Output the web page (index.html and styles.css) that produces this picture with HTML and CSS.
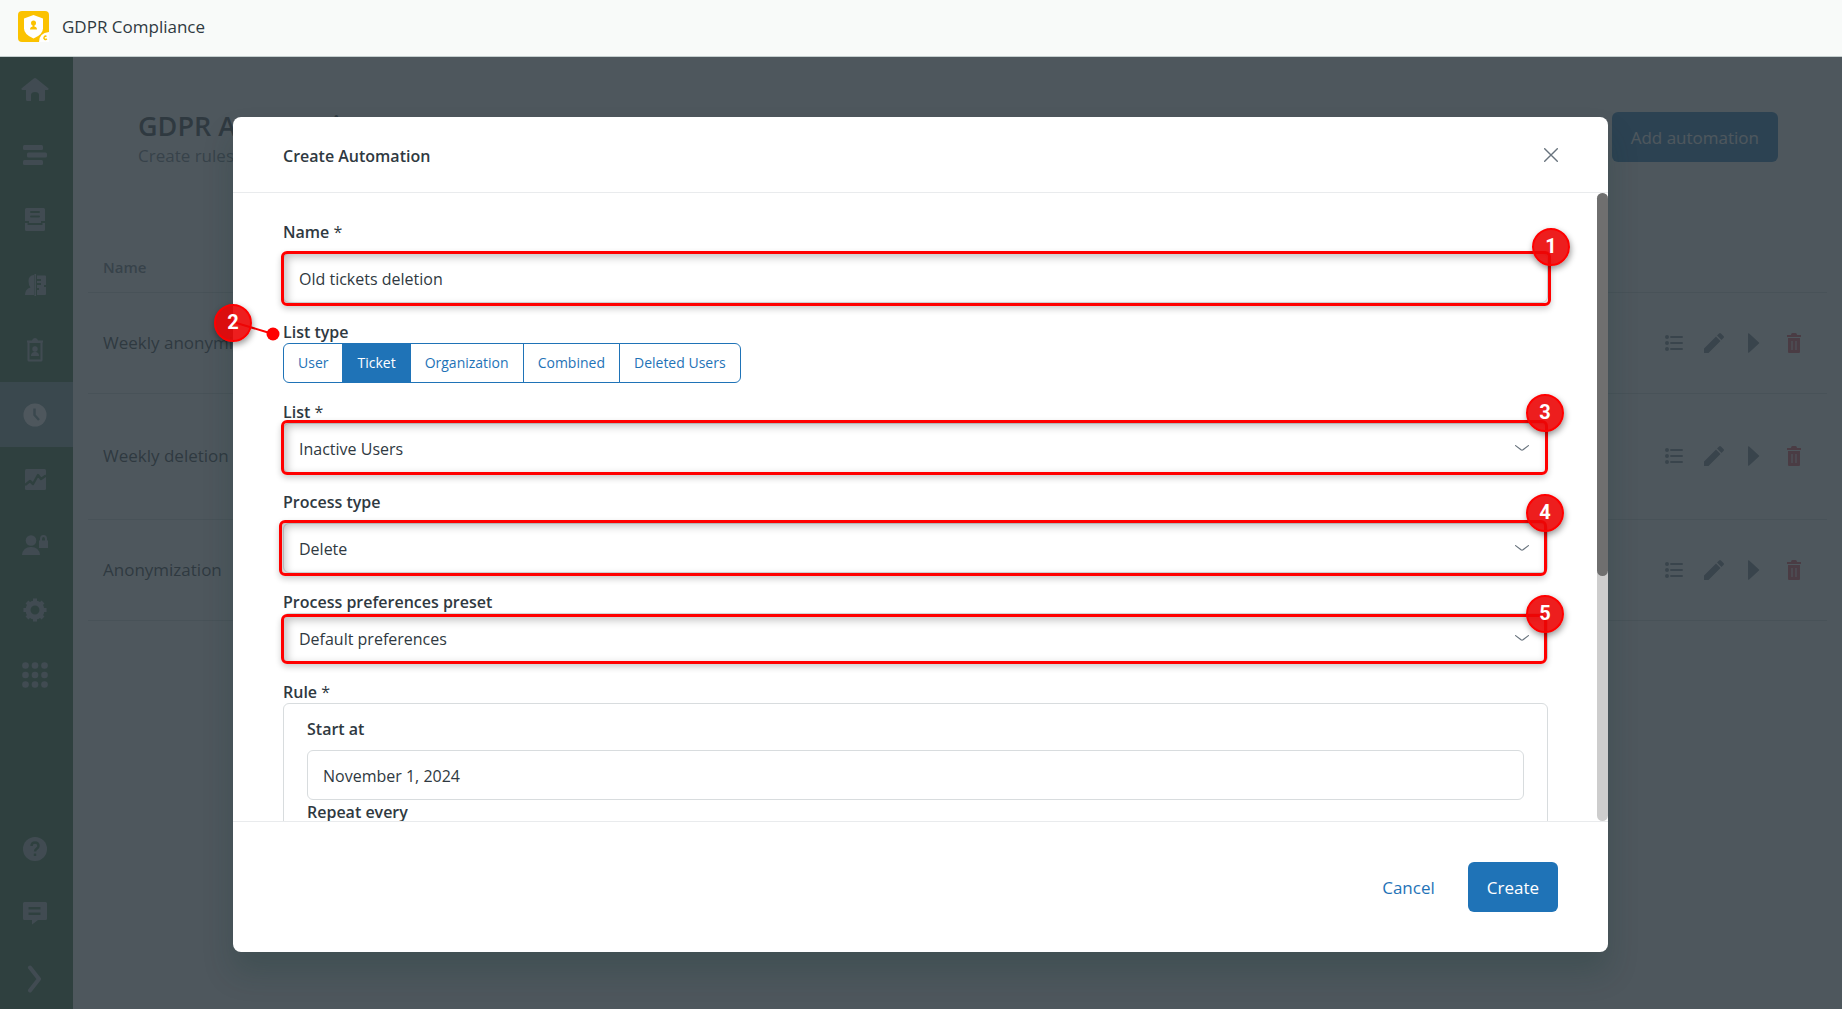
FILE: index.html
```html
<!DOCTYPE html>
<html lang="en">
<head>
<meta charset="utf-8">
<title>GDPR Compliance</title>
<link rel="stylesheet" href="styles.css">
</head>
<body>
<svg class="sprite" aria-hidden="true">
  <symbol id="i-list" viewBox="0 0 18 18"><g fill="currentColor"><circle cx="2" cy="3" r="2"/><circle cx="2" cy="9" r="2"/><circle cx="2" cy="15" r="2"/><rect x="5" y="2" width="13" height="2" rx="1"/><rect x="5" y="8" width="13" height="2" rx="1"/><rect x="5" y="14" width="13" height="2" rx="1"/></g></symbol>
  <symbol id="i-pencil" viewBox="0 0 20 20"><path fill="currentColor" d="M0 20v-4.500L12 3.500 16.500 8 4.500 20zM13 2.500l2-2q1-1 2 0l2.500 2.500q1 1 0 2l-2 2z"/></symbol>
  <symbol id="i-play" viewBox="0 0 12 20"><path fill="currentColor" d="M0 1q0-1.500 1.200-.4L11 9.400q.6.600 0 1.200L1.200 19.400Q0 20.500 0 19z"/></symbol>
  <symbol id="i-trash" viewBox="0 0 14 20"><path fill="currentColor" fill-rule="evenodd" d="M0 2h4q0-2 1.500-2h3Q10 0 10 2h4v2H0zM1 5h12v14q0 1-1 1H2q-1 0-1-1zM4.500 8v9h1V8zM8.500 8v9h1V8z"/></symbol>
  <symbol id="i-chevron" viewBox="0 0 14 6"><path fill="none" stroke="currentColor" stroke-width="1.200" stroke-linecap="round" d="M.6.600 6 4.800q1 .7 2 0L13.400.6"/></symbol>
</svg>

<header class="topbar">
  <svg class="logo" viewBox="0 0 31 31" aria-hidden="true">
    <rect width="31" height="31" rx="4" fill="#fbc200"/>
    <path fill="#fff" d="M15.500 4 25 7.500v10q0 6-9.500 10Q6 23.500 6 17.500v-10z"/>
    <g fill="#fbc200"><circle cx="15.500" cy="12" r="2.500"/><path d="M14.500 13h2v3h-2zM12 18.500q0-3 3.500-3t3.500 3z"/></g>
    <path fill="#fff" d="M21 31q0-9 10-10v10z"/>
    <path fill="none" stroke="#fbc200" stroke-width="1.500" d="M28.500 25.500a1.600 1.600 0 1 0 .3 2.300"/>
  </svg>
  <span class="topbar-title">GDPR Compliance</span>
</header>

<div class="app">
  <nav class="sidebar" aria-label="Main">
    <div class="nav-group">
      <a href="#" class="nav-item" aria-label="Home"><svg width="28" height="24" viewBox="0 0 28 24"><path fill="currentColor" d="M12.800.6q1.200-1 2.400 0L27 10q1.500 1.500-.5 2H24v9.500q0 1.500-1.500 1.500H18v-6q0-3-4-3t-4 3v6H6.500Q5 23 5 21.500V12H1.500q-2-.5-.5-2z"/></svg></a>
      <a href="#" class="nav-item" aria-label="Lists"><svg width="24" height="20" viewBox="0 0 24 20" fill="currentColor"><rect width="20" height="5" rx="1.500"/><rect x="4" y="7.500" width="20" height="5" rx="1.500"/><rect y="15" width="20" height="5" rx="1.500"/></svg></a>
      <a href="#" class="nav-item" aria-label="Tickets"><svg width="20" height="23" viewBox="0 0 20 23"><path fill="currentColor" fill-rule="evenodd" d="M1.500 0h17Q20 0 20 1.500V13h-4v2H4v-2H0V1.500Q0 0 1.500 0zM6 3q-1 0-1 1t1 1h8q1 0 1-1t-1-1zM6 7.500q-1 0-1 1t1 1h8q1 0 1-1t-1-1zM0 15h2.500v2h15v-2H20v6.500q0 1.500-1.500 1.500h-17Q0 23 0 21.500z"/></svg></a>
      <a href="#" class="nav-item" aria-label="User data"><svg width="21" height="22" viewBox="0 0 21 22"><path fill="currentColor" d="M9 1v20H0q0-6 5.500-7.500Q3.500 11 3.500 7q0-5.500 5.500-6zM9.500 0h1.500v22H9.500zM12 1.500h8q1 0 1 1V11h-2v2h2v7q0 1-1 1h-8v-5h2v-2h-2v-3h4V9h-4V7h4V5h-4z"/></svg></a>
      <a href="#" class="nav-item" aria-label="Records"><svg width="16" height="24" viewBox="0 0 16 24"><path fill="currentColor" fill-rule="evenodd" d="M0 2.500h5Q5.500 0 8 0t3 2.500h5V4.500h-.5V22q0 1.500-1.500 1.500H2Q.5 23.500.5 22V4.500H0zM2.500 5v16.500h11V5zM4 18q0-4 4-4t4 4z"/><circle cx="8" cy="11" r="2.700" fill="currentColor"/></svg></a>
      <a href="#" class="nav-item nav-item-active" aria-label="Automations"><svg width="24" height="24" viewBox="0 0 24 24"><circle cx="12" cy="12" r="11.500" fill="currentColor"/><path class="cut" d="M11.500 5.500V12l4.500 5"/></svg></a>
      <a href="#" class="nav-item" aria-label="Reports"><svg width="21" height="21" viewBox="0 0 21 21"><rect width="21" height="21" rx="1.500" fill="currentColor"/><path class="cut" d="M0 16l5-4 3 3 5-9 3 4 5-3.500"/></svg></a>
      <a href="#" class="nav-item" aria-label="Permissions"><svg width="26" height="20" viewBox="0 0 26 20" fill="currentColor"><circle cx="9" cy="5.500" r="5.300"/><path d="M0 20q1-8 9-8t9 8z"/><path fill-rule="evenodd" d="M17 5.500h1V4q0-4 3.500-4T25 4v1.500h1V13h-9zm3 0h3V4q0-2-1.500-2T20 4z"/></svg></a>
      <a href="#" class="nav-item" aria-label="Settings"><svg width="24" height="24" viewBox="0 0 24 24"><circle cx="12" cy="12" r="7" fill="none" stroke="currentColor" stroke-width="5"/><path stroke="currentColor" stroke-width="4" d="M12 .5v5M12 18.500v5M.5 12h5M18.500 12h5M4 4l3.500 3.500M16.500 16.500 20 20M20 4l-3.500 3.500M7.500 16.500 4 20"/></svg></a>
      <a href="#" class="nav-item" aria-label="Apps"><svg width="26" height="26" viewBox="0 0 26 26" fill="currentColor"><circle cx="3.500" cy="3.500" r="3.300"/><circle cx="13" cy="3.500" r="3.300"/><circle cx="22.500" cy="3.500" r="3.300"/><circle cx="3.500" cy="13" r="3.300"/><circle cx="13" cy="13" r="3.300"/><circle cx="22.500" cy="13" r="3.300"/><circle cx="3.500" cy="22.500" r="3.300"/><circle cx="13" cy="22.500" r="3.300"/><circle cx="22.500" cy="22.500" r="3.300"/></svg></a>
    </div>
    <div class="nav-group">
      <a href="#" class="nav-item" aria-label="Help"><svg width="24" height="24" viewBox="0 0 24 24"><circle cx="12" cy="12" r="12" fill="currentColor"/><path class="cut" d="M8.500 9q0-3.500 3.500-3.500T15.500 9q0 1.500-1.700 2.600T12 14.500M12 16.500v2.500"/></svg></a>
      <a href="#" class="nav-item" aria-label="Feedback"><svg width="24" height="23" viewBox="0 0 24 23"><path fill="currentColor" fill-rule="evenodd" d="M1.500 0h21Q24 0 24 1.500v15q0 1.500-1.500 1.500H15l-6 4.500V18H1.500Q0 18 0 16.500v-15Q0 0 1.500 0zM5.500 5v2.500h12V5zM5.500 10.500V13h12v-2.500z"/></svg></a>
      <a href="#" class="nav-item" aria-label="Expand menu"><svg width="16" height="28" viewBox="0 0 16 28"><path fill="none" stroke="currentColor" stroke-width="4" stroke-linecap="round" stroke-linejoin="round" d="M3 2.500 12 14 3 25.500"/></svg></a>
    </div>
  </nav>

  <main class="page">
    <div class="page-head">
      <div>
        <h1 class="page-title">GDPR Automations</h1>
        <p class="page-sub">Create rules</p>
      </div>
      <button class="btn btn-primary" type="button">Add automation</button>
    </div>
    <table class="rules">
      <thead><tr><th scope="col">Name</th><th></th></tr></thead>
      <tbody>
        <tr class="row-short"><td>Weekly anonymi...</td><td class="actions"><div class="action-row"><button class="icon-btn" type="button" aria-label="Log"><svg width="18" height="18"><use href="#i-list"/></svg></button><button class="icon-btn" type="button" aria-label="Edit"><svg width="20" height="20"><use href="#i-pencil"/></svg></button><button class="icon-btn" type="button" aria-label="Run"><svg width="12" height="20"><use href="#i-play"/></svg></button><button class="icon-btn icon-danger" type="button" aria-label="Delete"><svg width="14" height="20"><use href="#i-trash"/></svg></button></div></td></tr>
        <tr class="row-tall"><td>Weekly deletion</td><td class="actions"><div class="action-row"><button class="icon-btn" type="button" aria-label="Log"><svg width="18" height="18"><use href="#i-list"/></svg></button><button class="icon-btn" type="button" aria-label="Edit"><svg width="20" height="20"><use href="#i-pencil"/></svg></button><button class="icon-btn" type="button" aria-label="Run"><svg width="12" height="20"><use href="#i-play"/></svg></button><button class="icon-btn icon-danger" type="button" aria-label="Delete"><svg width="14" height="20"><use href="#i-trash"/></svg></button></div></td></tr>
        <tr class="row-short"><td>Anonymization</td><td class="actions"><div class="action-row"><button class="icon-btn" type="button" aria-label="Log"><svg width="18" height="18"><use href="#i-list"/></svg></button><button class="icon-btn" type="button" aria-label="Edit"><svg width="20" height="20"><use href="#i-pencil"/></svg></button><button class="icon-btn" type="button" aria-label="Run"><svg width="12" height="20"><use href="#i-play"/></svg></button><button class="icon-btn icon-danger" type="button" aria-label="Delete"><svg width="14" height="20"><use href="#i-trash"/></svg></button></div></td></tr>
      </tbody>
    </table>
  </main>

  <div class="backdrop">
    <div class="modal" role="dialog" aria-labelledby="modal-title">
      <div class="modal-head">
        <h2 class="modal-title" id="modal-title">Create Automation</h2>
        <button class="close" type="button" aria-label="Close"><svg width="14" height="14" viewBox="0 0 14 14"><path fill="none" stroke="currentColor" stroke-width="1.400" stroke-linecap="round" d="M.7.700l12.600 12.600M13.300.7.700 13.300"/></svg></button>
      </div>
      <div class="modal-body">
        <form class="form">
          <div class="field">
            <label for="name">Name <span class="req">*</span></label>
            <div class="control control-spaced">
              <input class="input" id="name" type="text" value="Old tickets deletion">
              <span class="frame frame-wide"></span><span class="badge badge-wide">1</span>
            </div>
          </div>
          <div class="field" role="group" aria-labelledby="type-label">
            <span class="label" id="type-label">List type</span>
            <div class="segmented">
              <button type="button" class="seg">User</button><button type="button" class="seg seg-on" aria-pressed="true">Ticket</button><button type="button" class="seg">Organization</button><button type="button" class="seg">Combined</button><button type="button" class="seg">Deleted Users</button>
            </div>
          </div>
          <div class="field">
            <label for="list">List <span class="req">*</span></label>
            <div class="control">
              <select class="input" id="list"><option>Inactive Users</option></select>
              <svg class="caret" width="14" height="6"><use href="#i-chevron"/></svg>
              <span class="frame"></span><span class="badge">3</span>
            </div>
          </div>
          <div class="field">
            <label for="process">Process type</label>
            <div class="control control-spaced">
              <select class="input" id="process"><option>Delete</option></select>
              <svg class="caret" width="14" height="6"><use href="#i-chevron"/></svg>
              <span class="frame frame-tall"></span><span class="badge">4</span>
            </div>
          </div>
          <div class="field">
            <label for="preset">Process preferences preset</label>
            <div class="control">
              <select class="input" id="preset"><option>Default preferences</option></select>
              <svg class="caret" width="14" height="6"><use href="#i-chevron"/></svg>
              <span class="frame frame-short"></span><span class="badge badge-low">5</span>
            </div>
          </div>
          <div class="field">
            <span class="label">Rule <span class="req">*</span></span>
            <div class="rule">
              <label for="start">Start at</label>
              <div class="control control-spaced"><input class="input" id="start" type="text" value="November 1, 2024"></div>
              <label for="repeat">Repeat every</label>
              <div class="control control-spaced"><input class="input" id="repeat" type="text"></div>
            </div>
          </div>
        </form>
        <div class="scrollbar"><div class="thumb"></div></div>
      </div>
      <div class="modal-foot">
        <button class="btn btn-link" type="button">Cancel</button>
        <button class="btn btn-primary" type="button">Create</button>
      </div>
      <svg class="pointer" width="50" height="30" viewBox="0 0 50 30"><path stroke="#f00" stroke-width="2" d="M0 6 40 18"/><circle cx="40" cy="18" r="6.500" fill="#f00"/></svg>
      <span class="badge badge-left">2</span>
    </div>
  </div>
</div>
</body>
</html>
```

FILE: styles.css
```css
* { box-sizing: border-box; }

body {
  margin: 0;
  height: 100vh;
  display: flex;
  flex-direction: column;
  overflow: hidden;
  background: #fff;
  color: #2f3941;
  font: 17px/24px "Open Sans", "Noto Sans", sans-serif;
}

button, input, select { font: inherit; color: inherit; }
.sprite { display: none; }

/* Top bar */
.topbar {
  flex: none;
  display: flex;
  align-items: center;
  gap: 13px;
  height: 57px;
  padding: 0 18px 4px;
  background: #f8faf9;
  border-bottom: 1px solid #c5cfcf;
}
.logo { width: 31px; height: 31px; }
.topbar-title { padding-top: 2px; font-size: 17px; font-weight: 500; }

.app { position: relative; flex: 1; min-height: 0; display: flex; }

/* Sidebar */
.sidebar {
  flex: none;
  width: 73px;
  display: flex;
  flex-direction: column;
  justify-content: space-between;
  background: #2f673a;
  overflow: hidden;
}
.nav-group:last-child { margin-bottom: -2px; }
.nav-item {
  display: flex;
  align-items: center;
  justify-content: center;
  height: 65px;
  padding-right: 3px;
  color: #a8b0b5;
}
.nav-item-active { background: #79989a; color: #fff; }
.cut { fill: none; stroke: #2f673a; stroke-width: 2.500; stroke-linejoin: round; }
.nav-item-active .cut { stroke: #79989a; }

/* Page behind the dialog */
.page { flex: 1; min-width: 0; padding: 55px 15px; }
.page-head {
  display: flex;
  align-items: flex-start;
  justify-content: space-between;
  padding: 0 49px 0 50px;
}
.page-title { margin: 0; font-size: 27px; line-height: 28px; font-weight: 600; }
.page-sub { margin: 4px 0 0; color: #68737d; }

.btn {
  height: 50px;
  padding: 2px 19px 0;
  border: 0;
  border-radius: 6px;
  background: none;
}
.btn-primary { background: #1f73b7; color: #fff; }
.btn-link { color: #1f73b7; }

.rules { width: 100%; margin-top: 75px; border-collapse: collapse; }
.rules th, .rules td { padding: 0 13px 0 15px; text-align: left; }
.rules th { height: 49px; font-size: 15px; font-weight: 600; color: #68737d; }
.rules tr { border-bottom: 1px solid #d8dcde; }
.row-short { height: 101px; }
.row-tall { height: 126px; }
.actions { width: 200px; }
.action-row { display: flex; justify-content: flex-end; }
.icon-btn {
  display: flex;
  align-items: center;
  justify-content: center;
  width: 40px;
  height: 40px;
  padding: 0;
  border: 0;
  background: none;
  color: #74808a;
}
.icon-danger { color: #e04a58; }

/* Dialog */
.backdrop {
  position: absolute;
  inset: 0;
  display: flex;
  align-items: flex-start;
  padding: 60px 234px 57px 233px;
  background: rgba(47, 57, 65, .85);
}
.modal {
  position: relative;
  flex: 1;
  max-height: 100%;
  display: flex;
  flex-direction: column;
  background: #fff;
  border-radius: 8px;
  box-shadow: 0 20px 30px rgba(20, 55, 50, .22);
}
.modal-head {
  flex: none;
  display: flex;
  align-items: center;
  justify-content: space-between;
  height: 76px;
  padding: 0 50px;
  border-bottom: 1px solid #e9ebed;
}
.modal-title { margin: 0; padding-top: 2px; font-size: 16px; line-height: 24px; font-weight: 600; }
.close { display: flex; padding: 0; border: 0; background: none; color: #68737d; }

.modal-body { flex: 1; min-height: 0; display: flex; overflow: hidden; }
.form {
  flex: 1;
  min-width: 0;
  display: flex;
  flex-direction: column;
  gap: 17px;
  padding: 27px 49px 27px 50px;
}
.field { display: flex; flex-direction: column; }
.label, label { padding-top: 2px; font-size: 16px; font-weight: 600; line-height: 21px; }
.req { font-weight: 400; }
.control { position: relative; }
.control-spaced { margin-top: 10px; }
.input {
  display: block;
  width: 100%;
  height: 50px;
  padding: 2px 15px 0;
  border: 1px solid #d8dcde;
  border-radius: 6px;
  background: #fff;
  font-size: 16px;
  appearance: none;
}
.caret { position: absolute; right: 19px; top: 22px; color: #68737d; }

.segmented { display: flex; }
.seg {
  height: 40px;
  padding: 0 14px;
  border: 1px solid #1f73b7;
  background: #fff;
  color: #1f73b7;
  font-size: 14px;
}
.seg + .seg { margin-left: -1px; }
.seg:first-child { border-radius: 6px 0 0 6px; }
.seg:last-child { border-radius: 0 6px 6px 0; }
.seg-on { background: #1f73b7; color: #fff; }

.rule { padding: 13px 23px; border: 1px solid #d8dcde; border-radius: 6px; }
.rule label { display: block; }

.scrollbar { flex: none; width: 11px; border-radius: 6px; background: #cdcdcd; }
.thumb { height: 61%; border-radius: 6px; background: #6f6f6f; }

.modal-foot {
  flex: none;
  display: flex;
  align-items: center;
  justify-content: flex-end;
  gap: 14px;
  height: 131px;
  padding: 0 50px;
  border-top: 1px solid #e9ebed;
}

/* Numbered callouts */
.frame {
  position: absolute;
  inset: -3px 0 -2px -2px;
  border: 3px solid #f00;
  border-radius: 6px;
  box-shadow: 0 3px 6px rgba(0, 0, 0, .2), inset 3px 3px 8px rgba(0, 0, 0, .25);
  pointer-events: none;
}
.frame-wide { inset: -2px -3px -3px -2px; }
.frame-tall { inset: -3px 1px -3px -4px; }
.frame-short { inset: 1px 1px -1px -2px; }
.badge {
  position: absolute;
  top: -29px;
  right: -16px;
  width: 38px;
  height: 38px;
  border: 2px solid #f00;
  border-radius: 50%;
  background: rgba(235, 5, 5, .9);
  box-shadow: 1px 3px 6px rgba(0, 0, 0, .4);
  color: #fff;
  font: 700 20px/33px Roboto, sans-serif;
  text-align: center;
}
.badge-wide { top: -25px; right: -22px; }
.badge-low { top: -18px; }
.badge-left { top: 187px; right: auto; left: -19px; }
.pointer { position: absolute; top: 199px; left: 0; }
```
